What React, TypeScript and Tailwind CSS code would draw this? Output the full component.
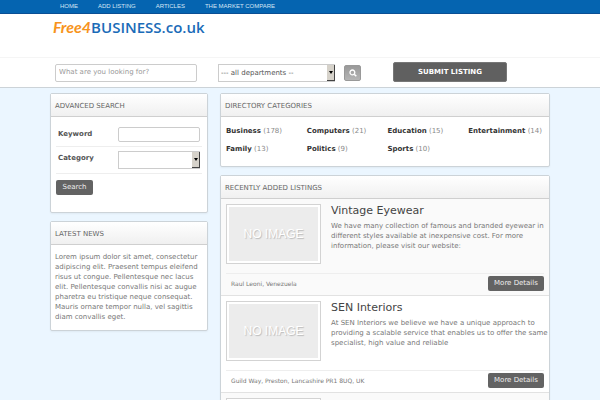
import React, { useState } from 'react';

interface Listing {
  title: string;
  description: string;
  address: string;
}

const navLinks = ['HOME', 'ADD LISTING', 'ARTICLES', 'THE MARKET COMPARE'];

const categories = [
  { name: 'Business', count: 178 },
  { name: 'Computers', count: 21 },
  { name: 'Education', count: 15 },
  { name: 'Entertainment', count: 14 },
  { name: 'Family', count: 13 },
  { name: 'Politics', count: 9 },
  { name: 'Sports', count: 10 },
];

const listings: Listing[] = [
  {
    title: 'Vintage Eyewear',
    description:
      'We have many collection of famous and branded eyewear in different styles available at inexpensive cost. For more information, please visit our website:',
    address: 'Raul Leoni, Venezuela',
  },
  {
    title: 'SEN Interiors',
    description:
      'At SEN Interiors we believe we have a unique approach to providing a scalable service that enables us to offer the same specialist, high value and reliable',
    address: 'Guild Way, Preston, Lancashire PR1 8UQ, UK',
  },
];

interface PanelProps {
  title: string;
  children: React.ReactNode;
}

const Panel: React.FC<PanelProps> = ({ title, children }) => (
  <section className="rounded-xs border border-[#ccd3d8] bg-white shadow-xs">
    <h2 className="h-[23px] border-b border-[#cfcfcf] bg-linear-to-b from-white to-[#f0f0f0] pl-1 text-[7px] leading-6 text-[#666]">
      {title}
    </h2>
    {children}
  </section>
);

interface DropdownProps {
  id: string;
  label: string;
  option: string;
  className?: string;
}

const Dropdown: React.FC<DropdownProps> = ({ id, label, option, className = '' }) => (
  <div className={`relative h-[18px] ${className}`}>
    <select
      id={id}
      aria-label={label}
      className="block h-full w-full appearance-none border border-[#ccc] bg-white pl-[2px] text-[7px] text-[#555]"
    >
      <option>{option}</option>
    </select>
    <span className="pointer-events-none absolute inset-y-px right-0 flex w-2 items-center justify-center border-r border-b border-[#444] bg-[#d6d2ca]">
      <svg viewBox="0 0 4 3" className="h-[3px] w-1" fill="#000">
        <path d="M0 0h4L2 3z" />
      </svg>
    </span>
  </div>
);

const Thumbnail: React.FC<{ text?: string }> = ({ text }) => (
  <div className="h-[60px] w-[95px] shrink-0 border border-[#d3d3d3] bg-white p-[2px]">
    <div className="flex h-full items-center justify-center bg-[#ececec] font-['Liberation_Sans',sans-serif] text-[12px] text-white [text-shadow:1px_1px_1px_#bbb]">
      {text}
    </div>
  </div>
);

const ListingRow: React.FC<{ listing: Listing }> = ({ listing }) => (
  <li className="border-b border-[#e2e2e2] px-[5px] pt-[5px] odd:bg-[#fafafa]">
    <div className="flex h-[69px] gap-[10px]">
      <Thumbnail text="NO IMAGE" />
      <div className="-mr-1 min-w-0 flex-1">
        <h3 className="text-[11px] leading-[13px] text-[#444]">{listing.title}</h3>
        <p className="mt-1 text-[7px] leading-[10px] text-[#777]">{listing.description}</p>
      </div>
    </div>
    <div className="flex h-[22px] items-center justify-between border-t border-[#eee] pb-[2px] pl-[5px]">
      <span className="text-[6px] text-[#777]">{listing.address}</span>
      <button className="h-[15px] w-14 rounded-xs bg-[#636363] text-[7px] leading-[15px] text-[#eee]">
        More Details
      </button>
    </div>
  </li>
);

const App = () => {
  const [query, setQuery] = useState('');
  const [keyword, setKeyword] = useState('');

  return (
    <div className="h-screen overflow-hidden bg-[#ebf6ff] font-['DejaVu_Sans',sans-serif]">
      <header className="bg-white">
        <nav className="h-[14px] border-b border-[#0a4f94] bg-[#0564b0] font-['Liberation_Sans',sans-serif]">
          <div className="mx-auto flex w-5/6 gap-5 pl-[10px] text-[6px] leading-[12px] text-[#d5e6f5]">
            {navLinks.map((link) => (
              <a key={link} href="#">
                {link}
              </a>
            ))}
          </div>
        </nav>

        <div className="h-11 border-b border-[#f5f5f5]">
          <div className="mx-auto w-5/6 pt-[2px] pl-[3px]">
            <a href="#" className="leading-5 text-[#1a6bb8]">
              <span className="font-['Lato',sans-serif] text-[16px] font-bold text-[#f7941d] italic">Free4</span>
              <span className="font-['Open_Sans',sans-serif] text-[15px] font-semibold">BUSINESS.co.uk</span>
            </a>
          </div>
        </div>

        {/* Search bar */}
        <div className="h-[30px] border-b border-[#ccd3d8]">
          <form className="mx-auto flex w-5/6 items-start pt-[4px] pl-[5px]" onSubmit={(e) => e.preventDefault()}>
            <input
              type="text"
              aria-label="What are you looking for?"
              placeholder="What are you looking for?"
              value={query}
              onChange={(e) => setQuery(e.target.value)}
              className="mt-[2px] h-[18px] w-[142px] rounded-xs border border-[#ccc] px-[3px] pb-[3px] text-[7px] text-[#555] placeholder:text-[#999]"
            />
            <Dropdown
              id="department"
              label="Department"
              option="--- all departments --"
              className="mt-[2px] ml-[21px] w-[117px]"
            />
            <button
              aria-label="Search"
              className="mt-[3px] ml-[9px] flex h-4 w-[17px] items-center justify-center rounded-xs border border-[#999] bg-linear-to-b from-[#999] to-[#b5b5b5]"
            >
              <svg viewBox="0 0 8 8" className="h-2 w-2" fill="none" stroke="#fff" strokeWidth="1.3">
                <circle cx="3.4" cy="3.4" r="2.4" />
                <path d="M5.2 5.2L7.3 7.3" strokeWidth="1.6" />
              </svg>
            </button>
            <button className="ml-8 h-5 w-[114px] rounded-xs border border-[#777] bg-[#606060] text-[7px] leading-none font-bold text-white">
              SUBMIT LISTING
            </button>
          </form>
        </div>
      </header>

      <main className="mx-auto flex w-5/6 items-start gap-3 pt-[5px]">
        <aside className="flex w-[158px] shrink-0 flex-col gap-2">
          <Panel title="ADVANCED SEARCH">
            <form className="px-[5px] pt-[5px] pb-[17px] text-[7px]" onSubmit={(e) => e.preventDefault()}>
              <div className="flex h-[25px] items-center border-b border-[#eee] px-[2px]">
                <label htmlFor="keyword" className="w-[60px] font-bold text-[#555]">
                  Keyword
                </label>
                <input
                  id="keyword"
                  type="text"
                  value={keyword}
                  onChange={(e) => setKeyword(e.target.value)}
                  className="h-[15px] min-w-0 flex-1 rounded-xs border border-[#ccc] px-[3px] text-[#555]"
                />
              </div>
              <div className="flex h-[27px] items-center border-b border-[#eee] px-[2px]">
                <label htmlFor="category" className="w-[60px] pb-[3px] font-bold text-[#555]">
                  Category
                </label>
                <Dropdown id="category" label="Category" option="" className="flex-1" />
              </div>
              <button className="mt-[6px] block h-[15px] w-[37px] rounded-xs bg-[#636363] text-[7px] leading-[15px] text-[#eee]">
                Search
              </button>
            </form>
          </Panel>

          <Panel title="LATEST NEWS">
            <p className="pt-[7px] pr-[5px] pb-2 pl-1 text-[7px] leading-[10px] text-[#777]">
              Lorem ipsum dolor sit amet, consectetur adipiscing elit. Praesent tempus eleifend risus ut congue.
              Pellentesque nec lacus elit. Pellentesque convallis nisi ac augue pharetra eu tristique neque consequat.
              Mauris ornare tempor nulla, vel sagittis diam convallis eget.
            </p>
          </Panel>
        </aside>

        <div className="flex min-w-0 flex-1 flex-col gap-2">
          <Panel title="DIRECTORY CATEGORIES">
            <ul className="grid grid-cols-4 pt-[5px] pb-2 pl-[5px] text-[7px] leading-[18px]">
              {categories.map((category) => (
                <li key={category.name} className="whitespace-nowrap text-[#888]">
                  <a href="#" className="font-bold text-[#333]">
                    {category.name}
                  </a>{' '}
                  ({category.count})
                </li>
              ))}
            </ul>
          </Panel>

          <Panel title="RECENTLY ADDED LISTINGS">
            <ul>
              {listings.map((listing) => (
                <ListingRow key={listing.title} listing={listing} />
              ))}
              {/* next listing, still loading */}
              <li className="bg-[#fafafa] p-[5px]">
                <Thumbnail />
              </li>
            </ul>
          </Panel>
        </div>
      </main>
    </div>
  );
};

export default App;
